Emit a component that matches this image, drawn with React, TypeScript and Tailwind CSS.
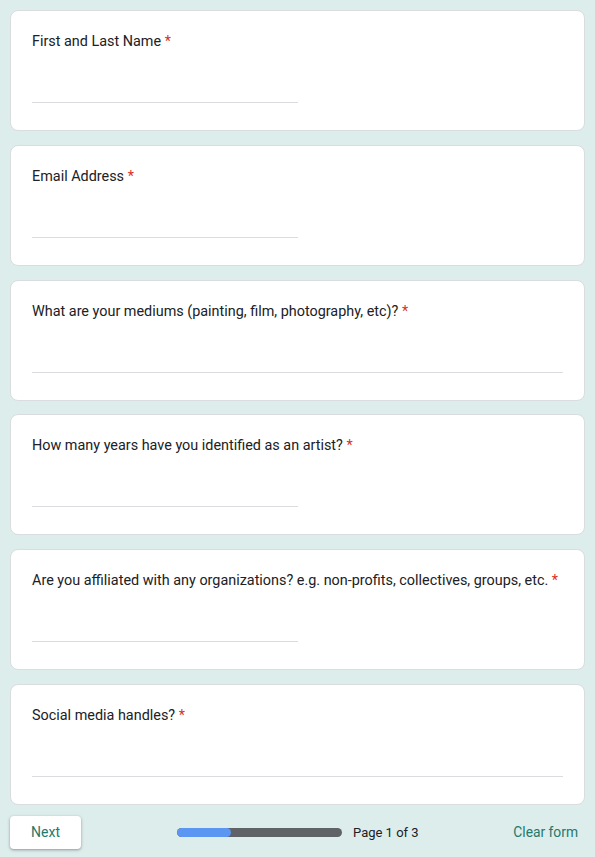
import React from 'react';

const QUESTIONS = [
  { title: 'First and Last Name', long: false },
  { title: 'Email Address', long: false },
  { title: 'What are your mediums (painting, film, photography, etc)?', long: true },
  { title: 'How many years have you identified as an artist?', long: false },
  { title: 'Are you affiliated with any organizations? e.g. non-profits, collectives, groups, etc.', long: false },
  { title: 'Social media handles?', long: true },
];

function QuestionCard({ title, long }: { title: string; long: boolean }) {
  return (
    <div className="bg-white border border-[#dadce0] rounded-[8px] px-[21px] pt-[21px] h-[121px]">
      <div className="text-[14.4px] leading-5 text-[#202124]">
        {title} <span className="text-[#d93025]">*</span>
      </div>
      <div className={`mt-[29px] h-[22px] border-b border-[#dadce0] ${long ? 'w-full' : 'w-[266px]'}`} />
    </div>
  );
}

export default function App() {
  return (
    <div
      className="min-h-[857px] bg-[#dcedeb] px-[10px] pt-[10px]"
      style={{ fontFamily: 'Roboto, "Liberation Sans", sans-serif' }}
    >
      <div className="flex flex-col gap-[13.75px]">
        {QUESTIONS.map((q) => (
          <QuestionCard key={q.title} title={q.title} long={q.long} />
        ))}
      </div>

      {/* Footer */}
      <div className="flex items-center mt-[11px] h-[33px]">
        <button className="w-[71px] h-[33px] bg-white rounded-[4px] shadow-[0_1px_2px_rgba(60,64,67,0.3),0_1px_3px_1px_rgba(60,64,67,0.15)] text-[14px] text-[#23796d]">
          Next
        </button>
        <div className="flex items-center ml-[96px]">
          <div className="w-[165px] h-[9px] rounded-full bg-[#5f6368] overflow-hidden">
            <div className="h-full bg-[#5b97f2] rounded-full" style={{ width: '33%' }} />
          </div>
          <span className="ml-[11px] text-[13px] text-[#202124]">Page 1 of 3</span>
        </div>
        <button className="ml-auto mr-[7px] text-[13.8px] text-[#23796d]">Clear form</button>
      </div>
    </div>
  );
}
